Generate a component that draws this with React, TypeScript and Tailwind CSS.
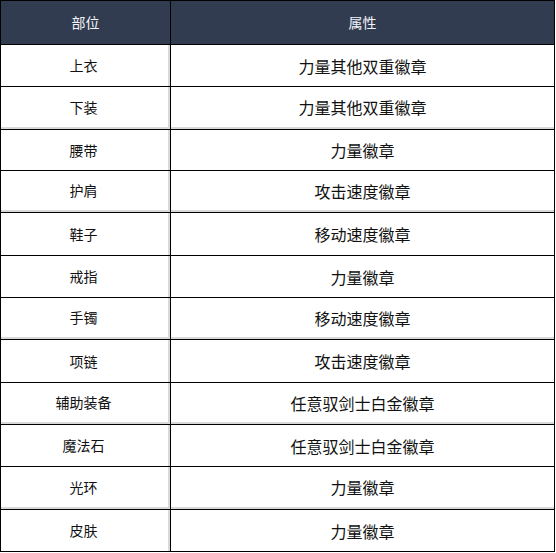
import React from "react";

type Row = { part: string; attr: string; h: number; gray?: boolean };

const rows: Row[] = [
  { part: "上衣", attr: "力量其他双重徽章", h: 42 },
  { part: "下装", attr: "力量其他双重徽章", h: 43, gray: true },
  { part: "腰带", attr: "力量徽章", h: 41 },
  { part: "护肩", attr: "攻击速度徽章", h: 42, gray: true },
  { part: "鞋子", attr: "移动速度徽章", h: 43 },
  { part: "戒指", attr: "力量徽章", h: 42 },
  { part: "手镯", attr: "移动速度徽章", h: 42, gray: true },
  { part: "项链", attr: "攻击速度徽章", h: 43 },
  { part: "辅助装备", attr: "任意驭剑士白金徽章", h: 42, gray: true },
  { part: "魔法石", attr: "任意驭剑士白金徽章", h: 42 },
  { part: "光环", attr: "力量徽章", h: 43, gray: true },
  { part: "皮肤", attr: "力量徽章", h: 42 },
];

const font = { fontFamily: '"Noto Sans CJK SC", "Noto Sans", sans-serif' };

export default function App() {
  return (
    <div className="w-[556px] h-[553px] bg-white" style={font}>
      <div className="w-[555px] border border-black">
        <div className="flex h-[43px] bg-[#323c51] text-[#f2f4f8] text-[14px]">
          <div className="w-[170px] flex items-center justify-center border-r border-black">部位</div>
          <div className="flex-1 flex items-center justify-center">属性</div>
        </div>
        {rows.map((r, i) => (
          <div
            key={i}
            className="flex border-t border-black text-[#111]"
            style={{ height: r.h }}
          >
            <div className="w-[170px] flex flex-col border-r border-black">
              <div className="flex-1 flex items-center justify-center text-[14px] pr-[2px] border-r-2 border-[#d9d9d9]">
                {r.part}
              </div>
              {r.gray ? <div className="h-[2px] bg-[#d9d9d9]" /> : null}
            </div>
            <div className="flex-1 flex flex-col">
              <div className="flex-1 flex items-center justify-center text-[16px]">{r.attr}</div>
              {r.gray ? <div className="h-[2px] bg-[#d9d9d9]" /> : null}
            </div>
          </div>
        ))}
      </div>
    </div>
  );
}
